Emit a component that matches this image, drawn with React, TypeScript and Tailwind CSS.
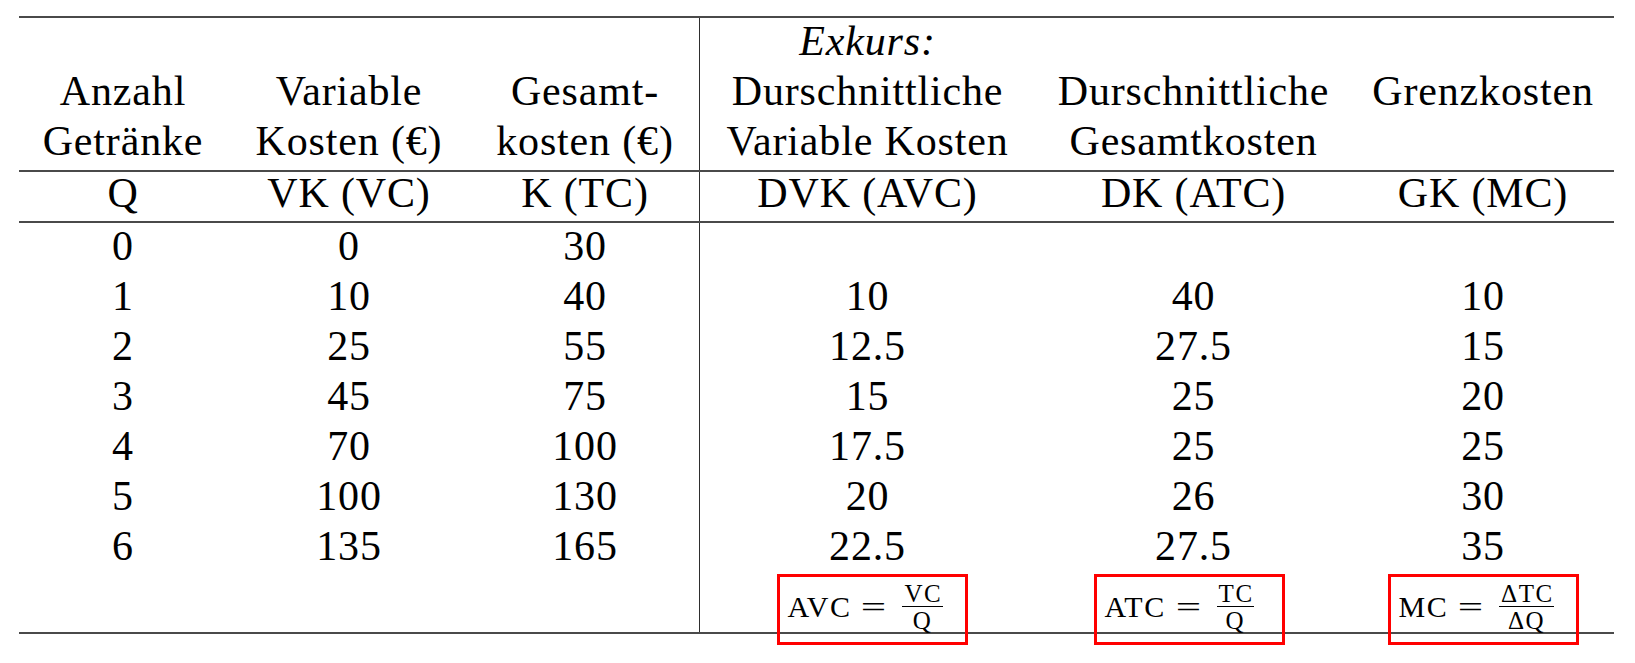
const cols = 'grid grid-cols-[208px_244px_228px_336px_317px_262px]'

const header: string[][] = [
  ['', 'Anzahl', 'Getränke'],
  ['', 'Variable', 'Kosten (€)'],
  ['', 'Gesamt-', 'kosten (€)'],
  ['Exkurs:', 'Durschnittliche', 'Variable Kosten'],
  ['', 'Durschnittliche', 'Gesamtkosten'],
  ['', 'Grenzkosten', ''],
]

const symbols = ['Q', 'VK (VC)', 'K (TC)', 'DVK (AVC)', 'DK (ATC)', 'GK (MC)']

const rows = [
  ['0', '0', '30', '', '', ''],
  ['1', '10', '40', '10', '40', '10'],
  ['2', '25', '55', '12.5', '27.5', '15'],
  ['3', '45', '75', '15', '25', '20'],
  ['4', '70', '100', '17.5', '25', '25'],
  ['5', '100', '130', '20', '26', '30'],
  ['6', '135', '165', '22.5', '27.5', '35'],
]

function Rule() {
  return <div className="h-[2px] w-full bg-[#4a4a4a]" />
}

function cellClass(i: number) {
  return i === 3 ? 'border-l border-[#2e2e2e]' : ''
}

function Fraction({ top, bottom }: { top: string; bottom: string }) {
  return (
    <span className="inline-flex flex-col items-center text-[25px] leading-none tracking-[1.5px]">
      <span className="border-b-[1.5px] border-black pl-[2px] pr-[0.5px]">{top}</span>
      <span className="pt-[1px]">{bottom}</span>
    </span>
  )
}

function FormulaBox({ left, top, bottom }: { left: string; top: string; bottom: string }) {
  return (
    <div className="relative z-10 mt-[1px] flex h-[71px] w-[191px] shrink-0 items-center border-[3px] border-[#ff0000] pb-[5px] pl-[8px]">
      <span className="text-[30px] leading-none tracking-[0.05em]">{left}</span>
      <span className="ml-[14px] mr-[20px] inline-block scale-x-150 text-[30px] leading-none">=</span>
      <Fraction top={top} bottom={bottom} />
    </div>
  )
}

export default function App() {
  return (
    <div className="h-[663px] w-full bg-white font-['Liberation_Serif',serif] text-black">
      <div className="ml-[19px] w-[1595px] pt-[16px]">
        <Rule />

        {/* header */}
        <div className={`${cols} h-[152px]`}>
          {header.map((lines, i) => (
            <div key={i} className={`flex flex-col text-center text-[42px] leading-[46px] tracking-[0.02em] ${cellClass(i)}`}>
              {lines.map((line, j) => (
                <div key={j} className={`h-[50px] whitespace-nowrap ${j === 0 ? 'italic' : ''}`}>
                  {line}
                </div>
              ))}
            </div>
          ))}
        </div>

        <Rule />

        <div className={`${cols} h-[49px]`}>
          {symbols.map((s, i) => (
            <div key={i} className={`text-center text-[42px] leading-[43px] tracking-[0.02em] ${cellClass(i)}`}>
              {s}
            </div>
          ))}
        </div>

        <Rule />

        {rows.map((r, k) => (
          <div key={k} className={`${cols} h-[50px]`}>
            {r.map((v, i) => (
              <div key={i} className={`text-center text-[42px] leading-[46px] tracking-[0.02em] ${cellClass(i)}`}>
                {v}
              </div>
            ))}
          </div>
        ))}

        {/* formulas */}
        <div className={`${cols} h-[59px] grid-rows-[59px]`}>
          <div />
          <div />
          <div />
          <div className={`flex h-[59px] justify-center pl-[9px] ${cellClass(3)}`}>
            <FormulaBox left="AVC" top="VC" bottom="Q" />
          </div>
          <div className="flex h-[59px] justify-center pr-[9px]">
            <FormulaBox left="ATC" top="TC" bottom="Q" />
          </div>
          <div className="flex h-[59px] justify-center">
            <FormulaBox left="MC" top="ΔTC" bottom="ΔQ" />
          </div>
        </div>

        <Rule />
      </div>
    </div>
  )
}
